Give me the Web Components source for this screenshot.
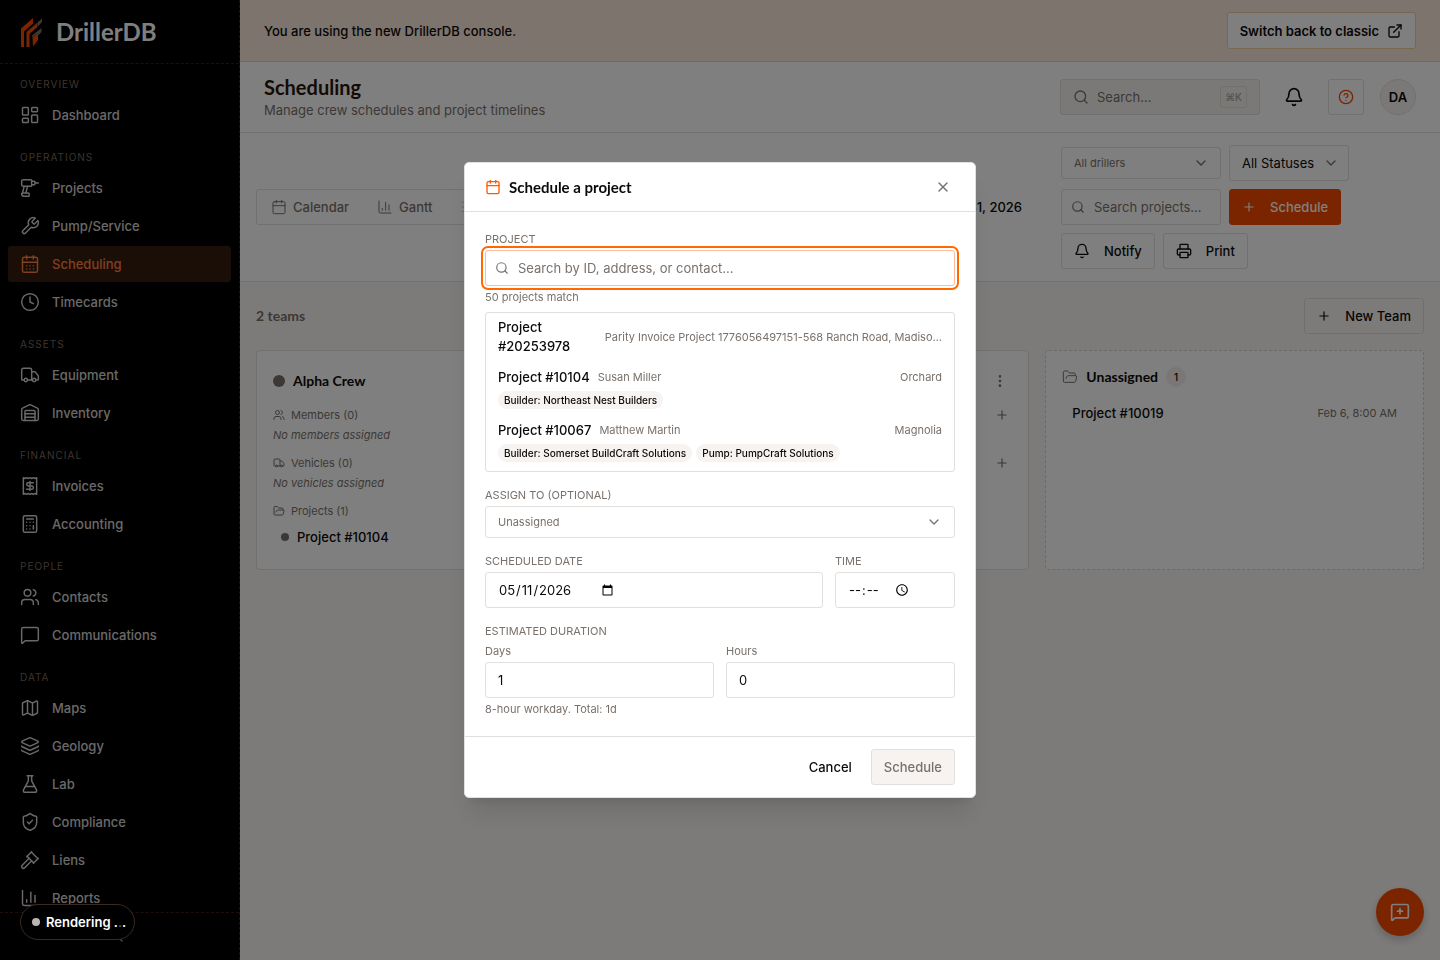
<!DOCTYPE html>
<html lang="en">
<head>
<meta charset="utf-8">
<title>Scheduling - DrillerDB</title>
<style>
    html, body { margin: 0; height: 100%; }
    body {
        --ink: #0c0a09;
        --muted: #79716b;
        --line: #e2e0de;
        --orange: #f54a00;
        --heading: Lato, 'Open Sans', sans-serif;
        font-family: Inter, 'Liberation Sans', sans-serif;
        font-size: 13px;
        line-height: 20px;
        color: var(--ink);
    }
</style>
</head>
<body>
<drill-app></drill-app>

<script>
const ICONS = {
    dashboard: '<rect width="7" height="9" x="3" y="3" rx="1"/><rect width="7" height="5" x="14" y="3" rx="1"/><rect width="7" height="9" x="14" y="12" rx="1"/><rect width="7" height="5" x="3" y="16" rx="1"/>',
    drill: '<path d="M10 18a1 1 0 0 1 1 1v2a1 1 0 0 1-1 1H5a3 3 0 0 1-3-3 1 1 0 0 1 1-1z"/><path d="M13 10H4a2 2 0 0 1-2-2V4a2 2 0 0 1 2-2h9a1 1 0 0 1 1 1v6a1 1 0 0 1-1 1z"/><path d="M14 4h3a1 1 0 0 1 1 1v2a1 1 0 0 1-1 1h-3"/><path d="M18 6h4"/><path d="m5 10-2 8"/><path d="m7 18 2-8"/>',
    wrench: '<path d="M14.7 6.3a1 1 0 0 0 0 1.4l1.6 1.6a1 1 0 0 0 1.4 0l3.77-3.77a6 6 0 0 1-7.94 7.94l-6.91 6.91a2.12 2.12 0 0 1-3-3l6.91-6.91a6 6 0 0 1 7.94-7.94l-3.76 3.76z"/>',
    calendarDays: '<path d="M8 2v4"/><path d="M16 2v4"/><rect width="18" height="18" x="3" y="4" rx="2"/><path d="M3 10h18"/><path d="M8 14h.01"/><path d="M12 14h.01"/><path d="M16 14h.01"/><path d="M8 18h.01"/><path d="M12 18h.01"/><path d="M16 18h.01"/>',
    calendar: '<path d="M8 2v4"/><path d="M16 2v4"/><rect width="18" height="18" x="3" y="4" rx="2"/><path d="M3 10h18"/>',
    clock: '<circle cx="12" cy="12" r="10"/><path d="M12 6v6l4 2"/>',
    truck: '<path d="M14 18V6a2 2 0 0 0-2-2H4a2 2 0 0 0-2 2v11a1 1 0 0 0 1 1h2"/><path d="M15 18H9"/><path d="M19 18h2a1 1 0 0 0 1-1v-3.65a1 1 0 0 0-.22-.62l-3.48-4.35A1 1 0 0 0 17.52 8H14"/><circle cx="17" cy="18" r="2"/><circle cx="7" cy="18" r="2"/>',
    warehouse: '<path d="M18 21V10a1 1 0 0 0-1-1H7a1 1 0 0 0-1 1v11"/><path d="M22 19a2 2 0 0 1-2 2H4a2 2 0 0 1-2-2V8a2 2 0 0 1 1.13-1.8l7.95-3.98a2 2 0 0 1 1.84 0l7.95 3.98A2 2 0 0 1 22 8z"/><path d="M6 13h12"/><path d="M6 17h12"/>',
    receipt: '<path d="M4 2v20l2-1 2 1 2-1 2 1 2-1 2 1 2-1 2 1V2l-2 1-2-1-2 1-2-1-2 1-2-1-2 1Z"/><path d="M16 8h-6a2 2 0 1 0 0 4h4a2 2 0 1 1 0 4H8"/><path d="M12 17.5v-11"/>',
    calculator: '<rect width="16" height="20" x="4" y="2" rx="2"/><path d="M8 6h8"/><path d="M16 14v4"/><path d="M16 10h.01"/><path d="M12 10h.01"/><path d="M8 10h.01"/><path d="M12 14h.01"/><path d="M8 14h.01"/><path d="M12 18h.01"/><path d="M8 18h.01"/>',
    users: '<path d="M16 21v-2a4 4 0 0 0-4-4H6a4 4 0 0 0-4 4v2"/><circle cx="9" cy="7" r="4"/><path d="M22 21v-2a4 4 0 0 0-3-3.87"/><path d="M16 3.13a4 4 0 0 1 0 7.75"/>',
    message: '<path d="M22 17a2 2 0 0 1-2 2H6.83a2 2 0 0 0-1.41.59l-2.2 2.2A.71.71 0 0 1 2 21.29V5a2 2 0 0 1 2-2h16a2 2 0 0 1 2 2z"/>',
    messagePlus: '<path d="M22 17a2 2 0 0 1-2 2H6.83a2 2 0 0 0-1.41.59l-2.2 2.2A.71.71 0 0 1 2 21.29V5a2 2 0 0 1 2-2h16a2 2 0 0 1 2 2z"/><path d="M12 8v6"/><path d="M9 11h6"/>',
    map: '<path d="M14.1 5.55a2 2 0 0 0 1.8 0l3.65-1.83A1 1 0 0 1 21 4.62v12.76a1 1 0 0 1-.55.9l-4.55 2.27a2 2 0 0 1-1.8 0l-4.2-2.1a2 2 0 0 0-1.8 0l-3.65 1.83A1 1 0 0 1 3 19.38V6.62a1 1 0 0 1 .55-.9L8.1 3.45a2 2 0 0 1 1.8 0z"/><path d="M15 5.76v15"/><path d="M9 3.24v15"/>',
    layers: '<path d="M12.83 2.18a2 2 0 0 0-1.66 0L2.6 6.08a1 1 0 0 0 0 1.83l8.58 3.91a2 2 0 0 0 1.66 0l8.58-3.9a1 1 0 0 0 0-1.83z"/><path d="M2 12a1 1 0 0 0 .58.91l8.6 3.91a2 2 0 0 0 1.65 0l8.58-3.9A1 1 0 0 0 22 12"/><path d="M2 17a1 1 0 0 0 .58.91l8.6 3.91a2 2 0 0 0 1.65 0l8.58-3.9A1 1 0 0 0 22 17"/>',
    flask: '<path d="M14 2v6a2 2 0 0 0 .25.96l5.51 10.08A2 2 0 0 1 18 22H6a2 2 0 0 1-1.76-2.96l5.51-10.08A2 2 0 0 0 10 8V2"/><path d="M6.45 15h11.1"/><path d="M8.5 2h7"/>',
    shield: '<path d="M20 13c0 5-3.5 7.5-7.66 8.95a1 1 0 0 1-.67-.01C7.5 20.5 4 18 4 13V6a1 1 0 0 1 1-1c2 0 4.5-1.2 6.24-2.72a1.17 1.17 0 0 1 1.52 0C14.51 3.81 17 5 19 5a1 1 0 0 1 1 1z"/><path d="m9 12 2 2 4-4"/>',
    gavel: '<path d="m14 13-8.38 8.38a2.12 2.12 0 0 1-3-3L11 10"/><path d="m16 16 6-6"/><path d="m21.5 10.5-8-8"/><path d="m8 8 6-6"/><path d="m8.5 7.5 8 8"/>',
    chart: '<path d="M3 3v16a2 2 0 0 0 2 2h16"/><path d="M18 17V9"/><path d="M13 17V5"/><path d="M8 17v-3"/>',
    list: '<path d="M3 5h.01"/><path d="M3 12h.01"/><path d="M3 19h.01"/><path d="M8 5h13"/><path d="M8 12h13"/><path d="M8 19h13"/>',
    external: '<path d="M15 3h6v6"/><path d="M10 14 21 3"/><path d="M18 13v6a2 2 0 0 1-2 2H5a2 2 0 0 1-2-2V8a2 2 0 0 1 2-2h6"/>',
    search: '<circle cx="11" cy="11" r="8"/><path d="m21 21-4.3-4.3"/>',
    bell: '<path d="M10.27 21a2 2 0 0 0 3.46 0"/><path d="M3.26 15.33A1 1 0 0 0 4 17h16a1 1 0 0 0 .74-1.67C19.41 13.96 18 12.5 18 8A6 6 0 0 0 6 8c0 4.5-1.41 5.96-2.74 7.33"/>',
    help: '<circle cx="12" cy="12" r="10"/><path d="M9.09 9a3 3 0 0 1 5.83 1c0 2-3 3-3 3"/><path d="M12 17h.01"/>',
    down: '<path d="m6 9 6 6 6-6"/>',
    left: '<path d="m15 18-6-6 6-6"/>',
    plus: '<path d="M5 12h14"/><path d="M12 5v14"/>',
    close: '<path d="M18 6 6 18"/><path d="m6 6 12 12"/>',
    printer: '<path d="M6 18H4a2 2 0 0 1-2-2v-5a2 2 0 0 1 2-2h16a2 2 0 0 1 2 2v5a2 2 0 0 1-2 2h-2"/><path d="M6 9V3a1 1 0 0 1 1-1h10a1 1 0 0 1 1 1v6"/><rect x="6" y="14" width="12" height="8" rx="1"/>',
    folder: '<path d="m6 14 1.5-2.9A2 2 0 0 1 9.24 10H20a2 2 0 0 1 1.94 2.5l-1.54 6a2 2 0 0 1-1.95 1.5H4a2 2 0 0 1-2-2V5a2 2 0 0 1 2-2h3.9a2 2 0 0 1 1.69.9l.81 1.2a2 2 0 0 0 1.67.9H18a2 2 0 0 1 2 2v2"/>',
    dots: '<circle cx="12" cy="12" r="1"/><circle cx="12" cy="5" r="1"/><circle cx="12" cy="19" r="1"/>'
};

function define(name, render) {
    customElements.define(name, class extends HTMLElement {
        constructor() {
            super();
            this.attachShadow({ mode: 'open' });
        }
        connectedCallback() {
            this.shadowRoot.innerHTML = '<style>* { box-sizing: border-box; }</style>' + render(this);
        }
    });
}

// <ui-icon name="bell" size="16">
define('ui-icon', el => {
    const size = el.getAttribute('size') || 16;
    return `
        <style>
            :host { display: block; flex: none; }
            svg { display: block; fill: none; stroke: currentColor; stroke-linecap: round; stroke-linejoin: round; }
        </style>
        <svg width="${size}" height="${size}" viewBox="0 0 24 24" stroke-width="${el.getAttribute('weight') || 2}" aria-hidden="true">${ICONS[el.getAttribute('name')]}</svg>`;
});

// Button with optional icon. variant: outline (default), primary, ghost, muted, banner
define('ui-button', el => {
    const icon = el.getAttribute('icon');
    return `
        <style>
            :host { display: block; flex: none; }
            button {
                display: flex; align-items: center; justify-content: center; gap: 14px;
                height: 36px; padding: 0 12px;
                font: 500 13px/20px Inter, sans-serif; color: var(--ink);
                background: transparent; border: 1px solid var(--line); border-radius: 3px;
                white-space: nowrap;
            }
            :host([variant=primary]) button { background: var(--orange); border-color: var(--orange); color: #fff; }
            :host([variant=ghost]) button { border-color: transparent; }
            :host([variant=muted]) button { background: #f7f3f1; color: var(--muted); }
            :host([variant=banner]) button { background: #fff; border-color: #f0d0a0; gap: 8px; font-weight: 600; height: 37px; }
            :host([square]) button { width: 36px; padding: 0; }
            :host([tiny]) button { width: 20px; height: 20px; padding: 0; }
        </style>
        <button type="button" aria-label="${el.getAttribute('label') || el.textContent.trim()}" ${el.hasAttribute('disabled') ? 'disabled' : ''}>
            ${icon ? `<ui-icon name="${icon}" size="${el.getAttribute('size') || 16}"></ui-icon>` : ''}
            ${el.hasAttribute('label') ? '' : '<slot></slot>'}
            ${el.hasAttribute('trail') ? `<ui-icon name="${el.getAttribute('trail')}"></ui-icon>` : ''}
        </button>`;
});

define('brand-logo', () => `
    <style>
        :host { display: flex; align-items: center; gap: 12px; height: 64px; padding: 0 20px; border-bottom: 1px dashed #3a1f12; }
        svg { width: 24px; height: 32px; flex: none; }
        span { font: 700 24px/32px var(--heading); color: #fff; }
    </style>
    <svg viewBox="0 0 24 32" aria-hidden="true">
        <g fill="#f54a00">
            <path d="M1 31V12.5L13 2v5.5L4 15.5V31z"/>
            <path d="M6.5 31V16L17.5 6.5V11L9.5 18V31z"/>
            <path d="M12.5 21l5.5-3.5V24l-5 6.5z"/>
        </g>
        <g fill="#78716c">
            <path d="M17.5 6.5L22 2.5V6l-4 4.5z"/>
            <path d="M12 19.5L21.5 12v4L18 19.5v-2L12 21z"/>
        </g>
    </svg>
    <span>DrillerDB</span>`);

define('nav-item', el => `
    <style>
        :host { display: block; }
        a {
            display: flex; align-items: center; gap: 12px; height: 36px; padding: 0 12px;
            border-radius: 3px; color: #d6d3d1; text-decoration: none; font-weight: 500;
        }
        :host([active]) a { background: #341c0d; color: #ff8040; }
    </style>
    <a href="#"><ui-icon name="${el.getAttribute('icon')}" size="20" weight="1.75"></ui-icon><slot></slot></a>`);

define('nav-group', el => `
    <style>
        :host { display: grid; gap: 2px; }
        h2 { margin: 0 12px 2px; font-size: 10px; line-height: 17px; font-weight: 400; letter-spacing: 1px; text-transform: uppercase; color: #79695f; }
    </style>
    <h2>${el.getAttribute('label')}</h2><slot></slot>`);

define('side-bar', () => `
    <style>
        :host { display: flex; flex-direction: column; height: 100%; background: #000; border-right: 1px dashed #3a1f12; }
        nav { flex: 1; min-height: 0; overflow: hidden; display: flex; flex-direction: column; gap: 16px; padding: 12px 8px; }
        nav > * { flex: none; }
        footer { flex: none; height: 48px; display: grid; place-items: center; border-top: 1px dashed #3a1f12; color: #a8a29e; }
    </style>
    <brand-logo></brand-logo>
    <nav aria-label="Main">
        <nav-group label="Overview">
            <nav-item icon="dashboard">Dashboard</nav-item>
        </nav-group>
        <nav-group label="Operations">
            <nav-item icon="drill">Projects</nav-item>
            <nav-item icon="wrench">Pump/Service</nav-item>
            <nav-item icon="calendarDays" active>Scheduling</nav-item>
            <nav-item icon="clock">Timecards</nav-item>
        </nav-group>
        <nav-group label="Assets">
            <nav-item icon="truck">Equipment</nav-item>
            <nav-item icon="warehouse">Inventory</nav-item>
        </nav-group>
        <nav-group label="Financial">
            <nav-item icon="receipt">Invoices</nav-item>
            <nav-item icon="calculator">Accounting</nav-item>
        </nav-group>
        <nav-group label="People">
            <nav-item icon="users">Contacts</nav-item>
            <nav-item icon="message">Communications</nav-item>
        </nav-group>
        <nav-group label="Data">
            <nav-item icon="map">Maps</nav-item>
            <nav-item icon="layers">Geology</nav-item>
            <nav-item icon="flask">Lab</nav-item>
            <nav-item icon="shield">Compliance</nav-item>
            <nav-item icon="gavel">Liens</nav-item>
            <nav-item icon="chart">Reports</nav-item>
        </nav-group>
    </nav>
    <footer><ui-icon name="left"></ui-icon></footer>`);

define('console-banner', () => `
    <style>
        :host {
            display: flex; align-items: center; justify-content: space-between;
            padding: 12px 24px; background: #f8e8da; border-bottom: 1px solid #f0d0a0; font-weight: 500;
        }
    </style>
    <span>You are using the new DrillerDB console.</span>
    <ui-button variant="banner" trail="external">Switch back to classic</ui-button>`);

define('page-header', () => `
    <style>
        :host { display: flex; align-items: center; gap: 16px; height: 71px; padding: 0 24px; background: #fff; border-bottom: 1px solid var(--line); }
        .titles { flex: 1; }
        h1 { margin: 0; font: 700 20px/26px var(--heading); color: #2a1409; }
        p { margin: 0; color: var(--muted); }
        .search {
            display: flex; align-items: center; gap: 8px; width: 200px; height: 36px; padding: 0 12px;
            background: #f5f3f0; border: 1px solid var(--line); border-radius: 3px; color: var(--muted);
            font: 400 13px/20px Inter, sans-serif; text-align: left;
        }
        .search span { flex: 1; }
        kbd { padding: 0 4px; border: 1px solid var(--line); border-radius: 3px; font: 500 10px/20px Inter, sans-serif; color: #a8a29e; }
        .help { color: var(--orange); }
        .help ui-button { --ink: var(--orange); }
        .avatar { display: grid; place-items: center; width: 36px; height: 36px; border-radius: 50%; background: #f5f3f0; border: 1px solid var(--line); font-weight: 600; }
    </style>
    <div class="titles">
        <h1>Scheduling</h1>
        <p>Manage crew schedules and project timelines</p>
    </div>
    <button class="search" type="button"><ui-icon name="search"></ui-icon><span>Search...</span><kbd>⌘K</kbd></button>
    <ui-button variant="ghost" square icon="bell" size="20" label="Notifications"></ui-button>
    <span class="help"><ui-button square icon="help" label="Help"></ui-button></span>
    <span class="avatar">DA</span>`);

define('schedule-toolbar', () => `
    <style>
        :host { display: flex; align-items: center; gap: 39px; padding: 12px 16px; background: #fff; border-bottom: 1px solid var(--line); }
        .left { flex: 1; display: flex; align-items: center; justify-content: space-between; }
        .tabs { display: flex; height: 36px; border: 1px solid var(--line); border-radius: 3px; }
        .tabs button {
            display: flex; align-items: center; gap: 6px; padding: 0 14px; border: 0; background: none;
            font: 500 13px/20px Inter, sans-serif; color: var(--muted);
        }
        .range { font-weight: 500; }
        .tools { flex: 0 1 363px; display: flex; flex-wrap: wrap; align-items: center; gap: 8px; }
        .pick, .find { display: grid; align-items: center; width: 160px; }
        .pick > *, .find > * { grid-area: 1 / 1; }
        .pick ui-icon { justify-self: end; margin-right: 12px; color: var(--muted); }
        .find ui-icon { margin-left: 10px; color: var(--muted); }
        .wide { width: 120px; }
        .wide ui-icon { margin-right: 10px; }
        select, input { width: 100%; height: 36px; padding: 0 12px; appearance: none; background: none; border: 1px solid var(--line); border-radius: 3px; font: 400 13px/20px Inter, sans-serif; color: var(--ink); }
        .small select { height: 32px; font-size: 11px; color: var(--muted); }
        input { padding-left: 32px; }
        input::placeholder { color: var(--muted); }
    </style>
    <div class="left">
        <div class="tabs">
            <button type="button"><ui-icon name="calendar" weight="1.5"></ui-icon>Calendar</button>
            <button type="button"><ui-icon name="chart" weight="1.5"></ui-icon>Gantt</button>
            <button type="button"><ui-icon name="list" weight="1.5"></ui-icon>List</button>
        </div>
        <span class="range">May 1 – 31, 2026</span>
    </div>
    <div class="tools">
        <div class="pick small"><select aria-label="Driller"><option>All drillers</option></select><ui-icon name="down"></ui-icon></div>
        <div class="pick wide"><select aria-label="Status"><option>All Statuses</option></select><ui-icon name="down"></ui-icon></div>
        <div class="find"><ui-icon name="search" size="14"></ui-icon><input type="text" aria-label="Search projects" placeholder="Search projects..."></div>
        <ui-button variant="primary" icon="plus" size="14">Schedule</ui-button>
        <ui-button icon="bell">Notify</ui-button>
        <ui-button icon="printer">Print</ui-button>
    </div>`);

define('crew-card', () => `
    <style>
        :host { display: block; min-height: 220px; padding: 16px; background: #fff; border: 1px solid var(--line); border-radius: 4px; }
        header, .row { display: flex; align-items: center; color: var(--muted); }
        header { gap: 8px; height: 28px; margin-bottom: 10px; color: var(--ink); }
        h3 { flex: 1; margin: 0; font: 700 14px/20px var(--heading); }
        .dot { width: 12px; height: 12px; border-radius: 50%; background: var(--muted); }
        .row { gap: 6px; height: 20px; font-size: 11px; line-height: 20px; }
        .row span { flex: 1; }
        em { display: block; margin-bottom: 8px; color: var(--muted); font-size: 11px; line-height: 20px; }
        ui-button { --ink: var(--muted); }
        header ui-button { margin-right: 2px; }
        .project { display: flex; align-items: center; gap: 8px; padding: 6px 8px; font-weight: 500; }
        .project i { width: 8px; height: 8px; border-radius: 50%; background: var(--muted); }
    </style>
    <header><span class="dot"></span><h3>Alpha Crew</h3><ui-button variant="ghost" tiny icon="dots" label="Team menu"></ui-button></header>
    <div class="row"><ui-icon name="users" size="12"></ui-icon><span>Members (0)</span><ui-button variant="ghost" tiny icon="plus" size="14" label="Add member"></ui-button></div>
    <em>No members assigned</em>
    <div class="row"><ui-icon name="truck" size="12"></ui-icon><span>Vehicles (0)</span><ui-button variant="ghost" tiny icon="plus" size="14" label="Add vehicle"></ui-button></div>
    <em>No vehicles assigned</em>
    <div class="row"><ui-icon name="folder" size="12"></ui-icon><span>Projects (1)</span></div>
    <div class="project"><i></i>Project #10104</div>`);

define('unassigned-card', () => `
    <style>
        :host { display: block; min-height: 220px; padding: 16px; background: #fff; border: 1px dashed #d6d3d1; border-radius: 4px; }
        header { display: flex; align-items: center; gap: 8px; height: 20px; margin-bottom: 16px; }
        header ui-icon { color: var(--muted); }
        h3 { margin: 0; font: 700 14px/20px var(--heading); }
        .count { width: 20px; border-radius: 10px; background: #f3f0ec; font-size: 10px; font-weight: 500; text-align: center; }
        .project { display: flex; justify-content: space-between; padding: 0 10px; font-weight: 500; }
        time { font-size: 11px; font-weight: 400; color: var(--muted); }
    </style>
    <header><ui-icon name="folder" weight="1.5"></ui-icon><h3>Unassigned</h3><span class="count">1</span></header>
    <div class="project">Project #10019<time>Feb 6, 8:00 AM</time></div>`);

define('team-board', () => `
    <style>
        :host { display: flex; flex-direction: column; gap: 16px; padding: 16px; }
        header { display: flex; align-items: center; justify-content: space-between; }
        h2 { margin: 0; font: 700 14px/20px var(--heading); color: var(--muted); }
        .grid { display: grid; grid-template-columns: repeat(3, 1fr); gap: 16px; }
        crew-card { grid-column: span 2; }
    </style>
    <header><h2>2 teams</h2><ui-button icon="plus" size="14">New Team</ui-button></header>
    <div class="grid"><crew-card></crew-card><unassigned-card></unassigned-card></div>`);

// One labelled control; caps renders the label in capitals
define('form-field', el => {
    const type = el.getAttribute('type') || 'text';
    const value = el.getAttribute('value') || '';
    const control = type === 'select'
        ? `<select id="control"><option>${value}</option></select><ui-icon class="end" name="down"></ui-icon>`
        : `<input id="control" type="${type}" value="${value}" placeholder="${el.getAttribute('placeholder') || ''}">`;
    return `
        <style>
            :host { display: block; }
            label { display: block; margin-bottom: 4px; font-size: 11px; line-height: 14px; color: var(--muted); }
            :host([caps]) label { text-transform: uppercase; }
            .box { display: grid; align-items: center; height: 36px; border: 1px solid var(--line); border-radius: 3px; }
            .box > * { grid-area: 1 / 1; }
            :host([type=select]) .box { height: 32px; }
            :host([ring]) .box { border-color: #ffb899; outline: 2px solid #ff6900; outline-offset: 2px; }
            .start { margin-left: 9px; color: var(--muted); }
            .end { justify-self: end; margin-right: 12px; color: var(--muted); }
            input, select {
                width: 100%; height: 100%; padding: 0 12px; border: 0; outline: 0; background: none; appearance: none;
                font: 400 13px/20px Inter, sans-serif; color: var(--ink);
            }
            input[type=date] { width: auto; justify-self: start; }
            input[type=time] { width: 88px; }
            input::-webkit-datetime-edit-ampm-field { display: none; }
            input::placeholder { color: var(--muted); }
            select { font-size: 11px; color: var(--muted); }
            .start + input { padding-left: 32px; }
        </style>
        <label for="control">${el.getAttribute('label')}</label>
        <div class="box">${el.hasAttribute('icon') ? `<ui-icon class="start" name="${el.getAttribute('icon')}" size="14"></ui-icon>` : ''}${control}</div>`;
});

define('project-option', el => `
    <style>
        :host { display: block; padding: 5px 12px 6px; }
        .main { display: flex; align-items: center; gap: 8px; min-height: 20px; line-height: 19px; }
        strong { font-weight: 500; }
        small { font-size: 11px; color: var(--muted); white-space: nowrap; }
        .place { margin-left: auto; }
        .tags { display: flex; gap: 4px; margin-top: 4px; }
        .tags:empty { display: none; }
        .tags span { padding: 0 6px; border-radius: 9px; background: #f7f3f1; font-size: 10px; line-height: 18px; font-weight: 500; }
    </style>
    <div class="main"><strong>${el.getAttribute('name')}</strong>${el.hasAttribute('person') ? `<small>${el.getAttribute('person')}</small>` : ''}<small class="place">${el.getAttribute('place')}</small></div>
    <div class="tags">${(el.getAttribute('tags') || '').split('|').filter(Boolean).map(t => `<span>${t}</span>`).join('')}</div>`);

define('schedule-dialog', () => `
    <style>
        :host { position: fixed; inset: 0; display: grid; place-items: center; background: rgba(0, 0, 0, .5); }
        section { width: 512px; max-width: 100%; background: #fff; border: 1px solid var(--line); border-radius: 5px; box-shadow: 0 20px 25px -5px rgba(0, 0, 0, .1), 0 8px 10px -6px rgba(0, 0, 0, .1); }
        header { display: flex; align-items: center; gap: 8px; height: 49px; padding: 0 14px 0 20px; border-bottom: 1px solid var(--line); }
        header > ui-icon { color: #ff5a00; }
        header ui-button { --ink: var(--muted); }
        h2 { flex: 1; margin: 0; font: 700 15px/20px var(--heading); }
        .body { display: grid; gap: 16px; padding: 20px; }
        .body > div { min-width: 0; }
        p { margin: 4px 0 0; font-size: 11px; line-height: 14px; color: var(--muted); }
        .list { height: 160px; margin-top: 8px; overflow: hidden; border: 1px solid var(--line); border-radius: 3px; }
        .when { display: grid; grid-template-columns: 1fr 120px; gap: 12px; }
        fieldset { min-width: 0; margin: 0; padding: 0; border: 0; }
        legend { padding: 0; margin-bottom: 6px; font-size: 11px; line-height: 14px; color: var(--muted); text-transform: uppercase; }
        .pair { display: grid; grid-template-columns: 1fr 1fr; gap: 12px; }
        footer { display: flex; justify-content: flex-end; gap: 6px; padding: 12px 20px; border-top: 1px solid var(--line); }
    </style>
    <section role="dialog" aria-label="Schedule a project">
        <header><ui-icon name="calendar"></ui-icon><h2>Schedule a project</h2><ui-button variant="ghost" square icon="close" label="Close"></ui-button></header>
        <div class="body">
            <div>
                <form-field caps ring icon="search" label="Project" placeholder="Search by ID, address, or contact..."></form-field>
                <p>50 projects match</p>
                <div class="list">
                    <project-option name="Project #20253978" place="Parity Invoice Project 1776056497151-568 Ranch Road, Madiso…"></project-option>
                    <project-option name="Project #10104" person="Susan Miller" place="Orchard" tags="Builder: Northeast Nest Builders"></project-option>
                    <project-option name="Project #10067" person="Matthew Martin" place="Magnolia" tags="Builder: Somerset BuildCraft Solutions|Pump: PumpCraft Solutions"></project-option>
                </div>
            </div>
            <form-field caps type="select" label="Assign to (optional)" value="Unassigned"></form-field>
            <div class="when">
                <form-field caps type="date" label="Scheduled date" value="2026-05-11"></form-field>
                <form-field caps type="time" label="Time"></form-field>
            </div>
            <fieldset>
                <legend>Estimated duration</legend>
                <div class="pair">
                    <form-field type="number" label="Days" value="1"></form-field>
                    <form-field type="number" label="Hours" value="0"></form-field>
                </div>
                <p>8-hour workday. Total: 1d</p>
            </fieldset>
        </div>
        <footer><ui-button variant="ghost">Cancel</ui-button><ui-button variant="muted" disabled>Schedule</ui-button></footer>
    </section>`);

define('status-pill', () => `
    <style>
        :host {
            position: fixed; left: 20px; bottom: 20px; display: flex; align-items: center; gap: 6px;
            height: 36px; padding: 0 8px 0 11px; background: #000; border: 1px solid #3a2a22; border-radius: 18px;
            color: #fff; font-weight: 600;
        }
        i { width: 8px; height: 8px; border-radius: 50%; background: #b8b5b2; }
        .fade { opacity: .3; }
    </style>
    <i></i><span>Rendering .<span class="fade">.</span>.</span>`);

define('chat-button', () => `
    <style>
        :host { position: fixed; right: 16px; bottom: 24px; }
        button { display: grid; place-items: center; width: 48px; height: 48px; padding: 0; border: 0; border-radius: 50%; background: var(--orange); color: #fff; box-shadow: 0 4px 8px rgba(0, 0, 0, .2); }
    </style>
    <button type="button" aria-label="Send feedback"><ui-icon name="messagePlus" size="20"></ui-icon></button>`);

define('drill-app', () => `
    <style>
        :host { display: grid; grid-template-columns: 240px 1fr; height: 100vh; overflow: hidden; background: #faf7f3; }
        main { min-width: 0; }
        side-bar { min-height: 0; }
    </style>
    <side-bar></side-bar>
    <main>
        <console-banner></console-banner>
        <page-header></page-header>
        <schedule-toolbar></schedule-toolbar>
        <team-board></team-board>
    </main>
    <chat-button></chat-button>
    <schedule-dialog></schedule-dialog>
    <status-pill></status-pill>`);
</script>
</body>
</html>
